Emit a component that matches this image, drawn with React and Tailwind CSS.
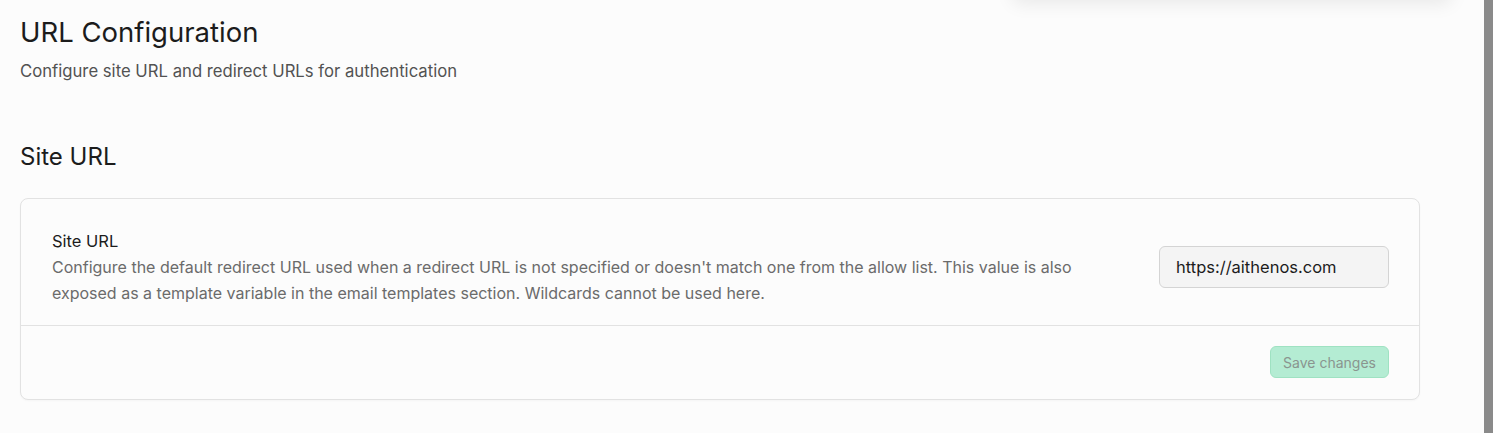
import React from 'react';

export default function App() {
  return (
    <div className="relative h-[433px] w-[1493px] overflow-hidden bg-[#fcfcfc] font-['Inter',sans-serif]">
      {/* shadow of a popover sitting above the viewport */}
      <div className="absolute left-[1012px] top-[-40px] h-[40px] w-[440px] rounded-lg bg-white shadow-[0_4px_18px_rgba(0,0,0,0.08)]" />
      <div className="absolute right-0 top-0 h-full w-[9px] bg-[#8a8a8a]" />

      <div className="w-[1420px] pl-5 pt-[14px]">
        <h1 className="text-[27.5px] leading-9 text-[#1c1c1c]">URL Configuration</h1>
        <p className="mt-[9px] text-[16.7px] leading-6 text-[#525252]">
          Configure site URL and redirect URLs for authentication
        </p>

        <h2 className="mt-[58px] text-[24px] leading-8 text-[#1c1c1c]">Site URL</h2>

        <div className="mt-[25px] rounded-lg border border-[#e2e2e2] bg-[#fcfcfc] shadow-[0_1px_2px_rgba(0,0,0,0.03)]">
          <div className="flex items-start justify-between gap-12 border-b border-[#e2e2e2] pb-[19px] pl-[31px] pr-[30px] pt-[31px]">
            <div className="max-w-[1070px]">
              <div className="text-[16.5px] leading-[22px] text-[#1c1c1c]">Site URL</div>
              <p className="mt-[2px] text-[16px] leading-[26px] text-[#6b6b6b]">
                Configure the default redirect URL used when a redirect URL is not specified or doesn't match one from the allow list. This value is also exposed as a template variable in the email templates section. Wildcards cannot be used here.
              </p>
            </div>
            <input
              type="text"
              readOnly
              value="https://aithenos.com"
              className="mt-[16px] h-[42px] w-[230px] shrink-0 rounded-md border border-[#d4d4d4] bg-[#f4f4f4] px-4 text-[16.5px] text-[#1c1c1c] outline-none"
            />
          </div>
          <div className="flex justify-end pb-[21px] pl-[31px] pr-[30px] pt-[20px]">
            <button
              type="button"
              disabled
              className="h-8 w-[119px] rounded-md border border-[#9fe2c2] bg-[#b4ecd3] text-[14px] text-[#8a958f]"
            >
              Save changes
            </button>
          </div>
        </div>
      </div>
    </div>
  );
}
